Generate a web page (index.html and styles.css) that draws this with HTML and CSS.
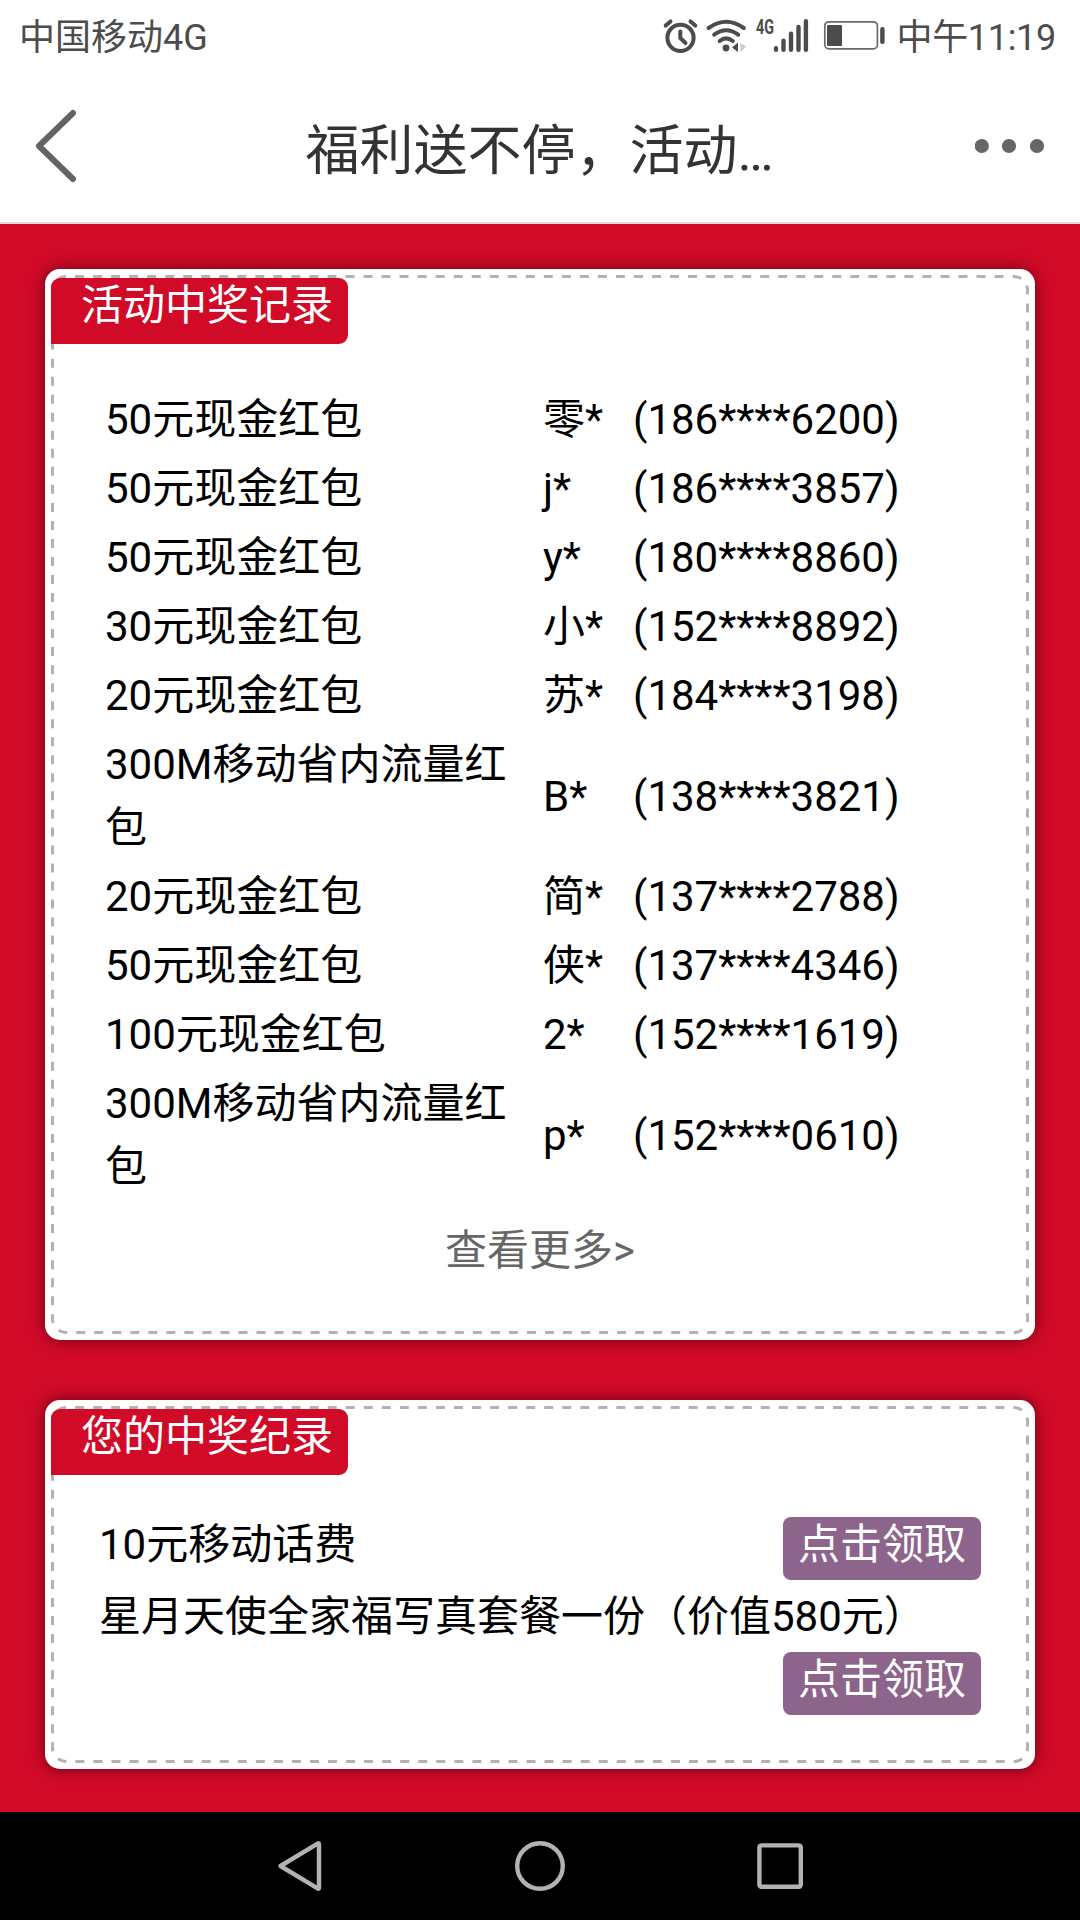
FILE: index.html
```
<!DOCTYPE html>
<html lang="zh-CN">
<head>
    <meta charset="UTF-8">
    <title>福利送不停，活动中奖记录</title>
    <link rel="stylesheet" href="styles.css">
</head>
<body>
    <!-- 状态栏 -->
    <div class="statusBar">
        <span>中国移动4G</span>
        <div class="statusRight">
            <svg class="statusIcons" width="226" height="72" viewBox="660 0 226 72">
                <!-- 闹钟 -->
                <g fill="none" stroke="#4c4c4c" stroke-width="4" stroke-linecap="round" stroke-linejoin="round">
                    <circle cx="680.5" cy="37.8" r="13.1"/>
                    <path d="M680.3 31.5V38l5.2 5"/>
                    <path d="M665.7 25.6l4.8-4.2M690.5 21.4l4.8 4.2"/>
                </g>
                <!-- WiFi -->
                <g fill="none" stroke="#4c4c4c" stroke-width="4" stroke-linecap="round">
                    <path d="M708.6 28q17.6-12.4 35.2 0"/>
                    <path d="M714.2 34.7q12-8.8 24 0"/>
                    <path d="M719.6 41q6.6-5.2 13.2 0"/>
                </g>
                <circle cx="726" cy="48" r="3.4" fill="#4c4c4c"/>
                <path d="M732 47.5l6-5v9.5z" fill="#4c4c4c"/>
                <path d="M740.3 43l6 3.5-6 5.8z" fill="#ccc"/>
                <!-- 信号 -->
                <text class="netType" x="756" y="34" textLength="18" lengthAdjust="spacingAndGlyphs">4G</text>
                <path d="M776 48.2v1.6M783.5 40.6v9.2M791 33.8v16M798.5 27v22.8M805.9 21.2v28.6" stroke="#4c4c4c" stroke-width="4.4" stroke-linecap="round"/>
                <!-- 电池 -->
                <rect x="824.8" y="21.8" width="52.6" height="27" rx="4" fill="none" stroke="#6a6a6a" stroke-width="1.7"/>
                <rect x="827" y="25" width="15" height="21" rx="1" fill="#4c4c4c"/>
                <rect x="880.2" y="27" width="4.4" height="17" rx="2" fill="#4c4c4c"/>
            </svg>
            <span class="time">中午11:19</span>
        </div>
    </div>

    <!-- 标题栏 -->
    <div class="titleBar">
        <svg class="backIcon" width="44" height="76" viewBox="34 109 44 76">
            <path d="M73 114L39 147l34 33" fill="none" stroke="#636363" stroke-width="6" stroke-linecap="round" stroke-linejoin="round"/>
        </svg>
        <h1>福利送不停，活动…</h1>
        <svg class="moreIcon" width="70" height="16" viewBox="975 138 70 16">
            <g fill="#666">
                <circle cx="981.8" cy="146" r="7.1"/>
                <circle cx="1009" cy="146" r="7.1"/>
                <circle cx="1037" cy="146" r="7.1"/>
            </g>
        </svg>
    </div>

    <div class="content">
        <!-- 活动中奖记录 -->
        <div class="panel panelAll">
            <svg class="dashed" width="978" height="1059">
                <rect x="1.5" y="1.5" width="975" height="1056" rx="13.5" stroke-dasharray="9 9.03" stroke-dashoffset="9"/>
            </svg>
            <h2>活动中奖记录</h2>
            <table class="records">
                <tr><td class="prize">50元现金红包</td><td class="name">零*</td><td>(186****6200)</td></tr>
                <tr><td class="prize">50元现金红包</td><td class="name">j*</td><td>(186****3857)</td></tr>
                <tr><td class="prize">50元现金红包</td><td class="name">y*</td><td>(180****8860)</td></tr>
                <tr><td class="prize">30元现金红包</td><td class="name">小*</td><td>(152****8892)</td></tr>
                <tr><td class="prize">20元现金红包</td><td class="name">苏*</td><td>(184****3198)</td></tr>
                <tr><td class="prize">300M移动省内流量红包</td><td class="name">B*</td><td>(138****3821)</td></tr>
                <tr><td class="prize">20元现金红包</td><td class="name">简*</td><td>(137****2788)</td></tr>
                <tr><td class="prize">50元现金红包</td><td class="name">侠*</td><td>(137****4346)</td></tr>
                <tr><td class="prize">100元现金红包</td><td class="name">2*</td><td>(152****1619)</td></tr>
                <tr><td class="prize">300M移动省内流量红包</td><td class="name">p*</td><td>(152****0610)</td></tr>
            </table>
            <p class="more">查看更多&gt;</p>
        </div>

        <!-- 您的中奖纪录 -->
        <div class="panel panelMine">
            <svg class="dashed" width="978" height="357">
                <rect x="1.5" y="1.5" width="975" height="354" rx="13.5" stroke-dasharray="9 9.046" stroke-dashoffset="9"/>
            </svg>
            <h2>您的中奖纪录</h2>
            <div class="mine">
                <div class="mineRow">
                    <span>10元移动话费</span>
                    <button>点击领取</button>
                </div>
                <div class="mineRow wrap">
                    <span>星月天使全家福写真套餐一份（价值580元）</span>
                    <button>点击领取</button>
                </div>
            </div>
        </div>
    </div>

    <!-- 导航键 -->
    <div class="navBar">
        <svg width="528" height="52" viewBox="277 1840 528 52" fill="none" stroke="#b2b2b2" stroke-width="4.4" stroke-linejoin="round">
            <path d="M280.5 1866l37.5-22.6q1 -.4 1 .8v43.6q0 1.2-1 .8z"/>
            <circle cx="540" cy="1866" r="22.8"/>
            <rect x="759.4" y="1845.4" width="41.4" height="41.4" rx="2"/>
        </svg>
    </div>
</body>
</html>
```
FILE: styles.css
```
* {
    box-sizing: border-box;
}
body {
    margin: 0;
    width: 1080px;
    height: 1920px;
    display: flex;
    flex-direction: column;
    font-family: Roboto, "Noto Sans CJK SC", sans-serif;
    font-size: 42px;
    line-height: 63px;
    color: #000;
    background-color: #fff;
    overflow: hidden;
}
h1, h2, p {
    margin: 0;
    font-weight: normal;
}
svg {
    display: block;
}

.statusBar {
    flex-shrink: 0;
    height: 72px;
    padding: 0 22px 0 19px;
    display: flex;
    justify-content: space-between;
    font-size: 36px;
    line-height: 77px;
    color: #4c4c4c;
}
.statusRight {
    display: flex;
    gap: 10px;
}
.time {
    letter-spacing: -0.3px;
    margin-right: 2px;
}
.netType {
    font-family: Roboto, sans-serif;
    font-size: 21px;
    font-weight: bold;
    fill: #4c4c4c;
}

.titleBar {
    flex-shrink: 0;
    height: 152px;
    padding: 0 35px 2px 34px;
    display: flex;
    align-items: center;
    justify-content: space-between;
    border-bottom: 2px solid #ddd;
}
.titleBar h1 {
    padding-top: 11px;
    font-size: 54px;
    line-height: 80px;
    color: #333;
}
.backIcon {
    margin-right: 26px;
}

.content {
    flex: 1;
    padding: 45px 45px 43px;
    display: flex;
    flex-direction: column;
    gap: 60px;
    background-color: #d10a28;
}
.panel {
    position: relative;
    padding: 9px 6px;
    background-color: #fff;
    border-radius: 15px;
    box-shadow: 0 0 15px rgba(0, 0, 0, 0.5);
}
.panelAll {
    height: 1071px;
}
.panelMine {
    height: 369px;
}
.dashed {
    position: absolute;
    left: 6px;
    top: 6px;
}
.dashed rect {
    fill: none;
    stroke: #b2b2b2;
    stroke-width: 3;
}
.panel h2 {
    position: relative;
    width: 297px;
    height: 66px;
    padding-left: 30px;
    font-size: 42px;
    line-height: 55px;
    color: #fff;
    background-color: #d10a28;
    border-radius: 9px 9px 9px 0;
}

.records {
    margin: 41px 0 0 54px;
    border-collapse: collapse;
}
.records td {
    padding: 3px 0;
}
.records .prize {
    width: 438px;
    padding-right: 20px;
}
.records .name {
    width: 90px;
}
.more {
    margin-top: 18px;
    text-align: center;
    color: #666;
}

.mine {
    padding: 42px 48px 0;
}
.mineRow {
    display: flex;
    justify-content: space-between;
}
.wrap {
    flex-direction: column;
    margin-top: 5px;
}
.mineRow span {
    line-height: 55px;
}
.wrap span {
    line-height: 63px;
}
.mineRow button {
    align-self: flex-end;
    width: 198px;
    height: 63px;
    padding: 0 15px 8px;
    border: none;
    border-radius: 8px;
    font: inherit;
    line-height: 55px;
    color: #fff;
    background-color: #8c648c;
}
.wrap button {
    margin-top: 4px;
}

.navBar {
    flex-shrink: 0;
    height: 108px;
    padding-left: 277px;
    display: flex;
    align-items: center;
    background-color: #000;
}
```
